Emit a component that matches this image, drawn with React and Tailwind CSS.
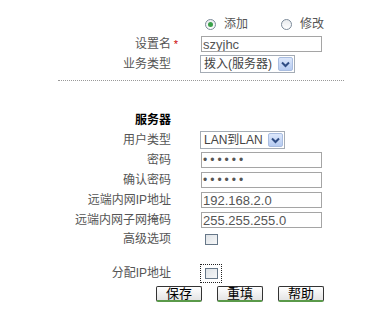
import React from "react"

const font = { fontFamily: '"Liberation Sans", Arial, "Noto Sans CJK SC", sans-serif' }

const Label = ({ children, bold }) => (
  <div
    className={`w-[171px] flex justify-end items-center text-[12px] whitespace-nowrap ${
      bold ? "font-bold text-black" : "text-[#555]"
    }`}
  >
    {children}
  </div>
)

const TextBox = ({ value, password }) => (
  <div className="ml-[30px] w-[121px] h-[16px] border border-[#a5a5a5] bg-white flex items-center px-[1px] text-[13px] text-[#555] leading-none overflow-hidden whitespace-nowrap">
    {password ? (
      <span className="text-[12px] tracking-[3px] text-[#555]">••••••</span>
    ) : (
      value
    )}
  </div>
)

const Select = ({ value, width }) => (
  <div
    className={`ml-[29px] h-[18px] border border-[#a5acb5] bg-white flex items-center justify-between pl-[3px] pr-[1px] text-[12px] text-[#444] whitespace-nowrap ${width}`}
  >
    <span className="leading-none">{value}</span>
    <span className="w-[15px] h-[14px] rounded-[2px] border border-[#a9bde0] bg-gradient-to-b from-[#dce7fb] to-[#b6cbf1] flex items-center justify-center">
      <svg width="9" height="7" viewBox="0 0 9 7">
        <path d="M1 1.5 L4.5 5 L8 1.5" fill="none" stroke="#2f4d84" strokeWidth="2" />
      </svg>
    </span>
  </div>
)

const Radio = ({ checked, label }) => (
  <div className="flex items-center">
    <span className="w-[11px] h-[11px] rounded-full border border-[#7b8a99] bg-gradient-to-b from-[#e8ebee] to-white flex items-center justify-center">
      {checked && <span className="w-[5px] h-[5px] rounded-full bg-[#3aa14a]"></span>}
    </span>
    <span className="ml-[8px] text-[12px] text-[#555]">{label}</span>
  </div>
)

const CheckBox = ({ focused }) => (
  <div
    className={`flex items-center justify-center ${
      focused ? "ml-[29px] w-[22px] h-[19px] border border-dotted border-[#222]" : "ml-[34px] w-[13px] h-[11px]"
    }`}
  >
    <span className="w-[13px] h-[11px] border border-[#667788] bg-gradient-to-br from-[#dfe3e7] to-[#f6f7f8]"></span>
  </div>
)

const Button = ({ children }) => (
  <button className="w-[46px] h-[16px] rounded-[2px] border border-[#333] border-b-[2px] border-b-[#5a9a4a] bg-gradient-to-b from-white to-[#e4e4e4] text-[13px] text-black leading-none flex items-center justify-center">
    {children}
  </button>
)

const Row = ({ children, h = "h-[20px]" }) => <div className={`flex items-center ${h}`}>{children}</div>

export default function App() {
  return (
    <div className="w-[378px] h-[327px] bg-white pt-[14px]" style={font}>
      <Row>
        <div className="ml-[205px] flex items-center gap-[33px]">
          <Radio checked label="添加" />
          <Radio label="修改" />
        </div>
      </Row>
      <Row>
        <Label>
          设置名<span className="text-[#c00] text-[11px] -mr-[7px] w-[7px] text-right">*</span>
        </Label>
        <TextBox value="szyjhc" />
      </Row>
      <Row>
        <Label>业务类型</Label>
        <Select value="拨入(服务器)" width="w-[95px]" />
      </Row>
      <div className="ml-[58px] w-[286px] mt-[6px] border-t border-dotted border-[#999]"></div>

      <div className="h-[29px]"></div>
      <Row>
        <Label bold>服务器</Label>
      </Row>
      <Row>
        <Label>用户类型</Label>
        <Select value="LAN到LAN" width="w-[85px]" />
      </Row>
      <Row>
        <Label>密码</Label>
        <TextBox password />
      </Row>
      <Row>
        <Label>确认密码</Label>
        <TextBox password />
      </Row>
      <Row>
        <Label>远端内网IP地址</Label>
        <TextBox value="192.168.2.0" />
      </Row>
      <Row>
        <Label>远端内网子网掩码</Label>
        <TextBox value="255.255.255.0" />
      </Row>
      <Row h="h-[18px]">
        <Label>高级选项</Label>
        <CheckBox />
      </Row>
      <div className="h-[15px]"></div>
      <Row>
        <Label>分配IP地址</Label>
        <CheckBox focused />
      </Row>
      <div className="ml-[156px] mt-[3px] flex gap-[15px]">
        <Button>保存</Button>
        <Button>重填</Button>
        <Button>帮助</Button>
      </div>
    </div>
  )
}
